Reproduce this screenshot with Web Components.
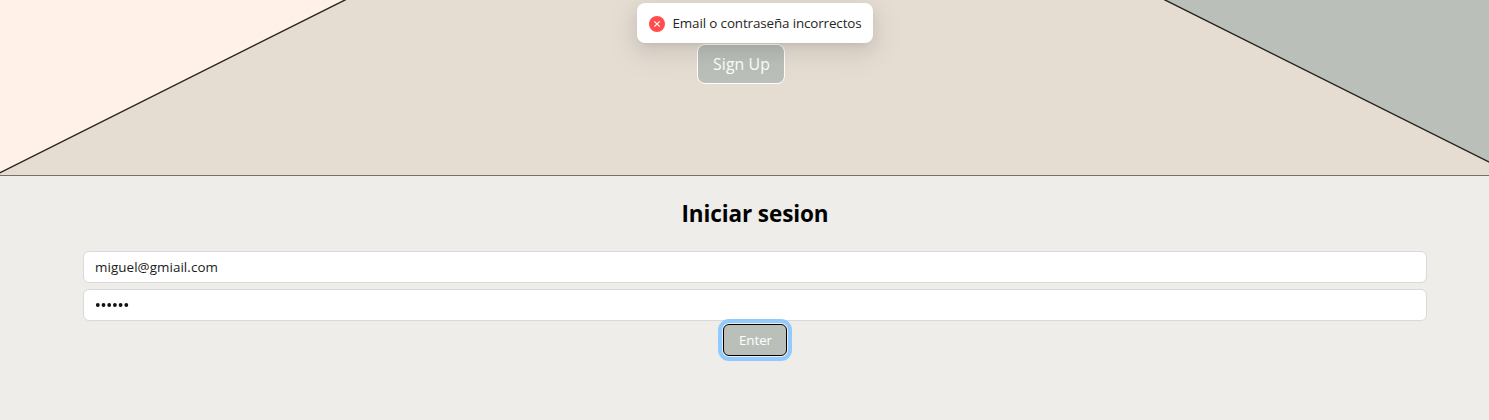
<!DOCTYPE html>
<html lang="es"><head><meta charset="utf-8"><title>Iniciar sesion</title>
<style>html,body{margin:0;height:100%}body{background:#eeede9;font-family:"Open Sans","Noto Sans",sans-serif;overflow:hidden}</style></head>
<body>
<login-page></login-page>
<script>
const define = (name, html, init) => customElements.define(name, class extends HTMLElement {
  constructor() { super(); this.attachShadow({ mode: 'open' }).innerHTML = html; }
  connectedCallback() { if (init) init(this); }
});

// Single-line label whose tracking is adjusted to a given width.
define('fit-text', `<style>:host{display:inline-block;white-space:nowrap}span{display:inline-block}</style><span><slot></slot></span>`, el => {
  const span = el.shadowRoot.querySelector('span');
  const want = +el.getAttribute('width');
  span.style.letterSpacing = (want - span.getBoundingClientRect().width) / el.textContent.length + 'px';
});

define('hero-banner', `<style>
:host{display:grid;height:176px;box-sizing:border-box;border-bottom:1px solid #75716a;background:#e5ddd2;overflow:hidden}
svg{grid-area:1/1;display:block}
.actions{grid-area:1/1;padding:44px 7px 0 0;display:flex;justify-content:center;align-items:flex-start}
</style>
<svg width="1489" height="175" viewBox="0 0 1489 175">
<path d="M-4 174.7L349-2H-4z" fill="#fff1e7" stroke="#24221e" stroke-width="1.4"/>
<path d="M1161-2L1493 164V-2z" fill="#bac0b9" stroke="#24221e" stroke-width="1.4"/></svg>
<div class="actions"><slot></slot></div>`);

define('ui-button', `<style>
:host{display:block}
button{display:flex;align-items:center;justify-content:center;box-sizing:border-box;margin:0;padding:0;width:64px;height:32px;border:1px solid #000;border-radius:6px;background:#bac0b9;color:#fff;font:13.4px "Open Sans","Noto Sans",sans-serif}
:host([large]) button{width:88px;height:40px;padding-left:1px;border-color:#fff;border-radius:8px;font-size:15.8px}
:host([focused]) button{padding-left:1px;outline:4px solid #91caff;outline-offset:1px}
</style><button type="button"><slot></slot></button>`);

define('text-field', `<style>
:host{display:flex;align-items:center;box-sizing:border-box;height:32px;padding:0 11px;border:1px solid #d9d9d9;border-radius:6px;background:#fff;color:#1a1a1a;font-size:13.4px;line-height:22px}
</style><slot></slot>`);

define('password-dots', `<style>:host{display:block}svg{display:block}</style>
<svg width="36" height="6" viewBox="0 0 36 6" fill="#111"><circle cx="2.8" cy="3" r="1.9"/><circle cx="8.5" cy="3" r="1.9"/><circle cx="14.2" cy="3" r="1.9"/><circle cx="19.9" cy="3" r="1.9"/><circle cx="25.6" cy="3" r="1.9"/><circle cx="31.3" cy="3" r="1.9"/></svg>`);

define('toast-message', `<style>
:host{position:absolute;top:3px;left:637px;width:236px;height:40px;box-sizing:border-box;padding:0 12px;display:flex;align-items:center;gap:7.5px;border-radius:8px;background:#fff;color:#262626;font-size:13.4px;line-height:22px;
box-shadow:0 6px 16px 0 rgba(0,0,0,.08),0 3px 6px -4px rgba(0,0,0,.12),0 9px 28px 8px rgba(0,0,0,.05)}
svg{flex:none;display:block;margin-top:1px}
</style><svg width="16" height="16" viewBox="0 0 16 16"><circle cx="8" cy="8" r="8" fill="#ff4d4f"/><path d="M5.3 5.3l5.4 5.4m0-5.4l-5.4 5.4" stroke="#fff" stroke-width="1.2"/></svg><slot></slot>`);

define('login-form', `<style>
:host{display:flex;flex-direction:column;align-items:center;padding:20px 62px 0 83px}
h1{margin:0;font-size:22.5px;line-height:36px;font-weight:700;color:#000}
.fields{align-self:stretch;display:flex;flex-direction:column;gap:6px;margin:19px 0 3px}
</style>
<h1><fit-text width="147">Iniciar sesion</fit-text></h1>
<div class="fields"><text-field><fit-text width="123">miguel@gmiail.com</fit-text></text-field><text-field><password-dots></password-dots></text-field></div>
<ui-button focused><fit-text width="33">Enter</fit-text></ui-button>`);

define('login-page', `<style>:host{display:block;position:relative;width:1489px;height:420px;overflow:hidden;background:#eeede9}</style>
<hero-banner><ui-button large><fit-text width="57">Sign Up</fit-text></ui-button></hero-banner>
<login-form></login-form>
<toast-message><fit-text width="189">Email o contraseña incorrectos</fit-text></toast-message>`);
</script>
</body></html>
